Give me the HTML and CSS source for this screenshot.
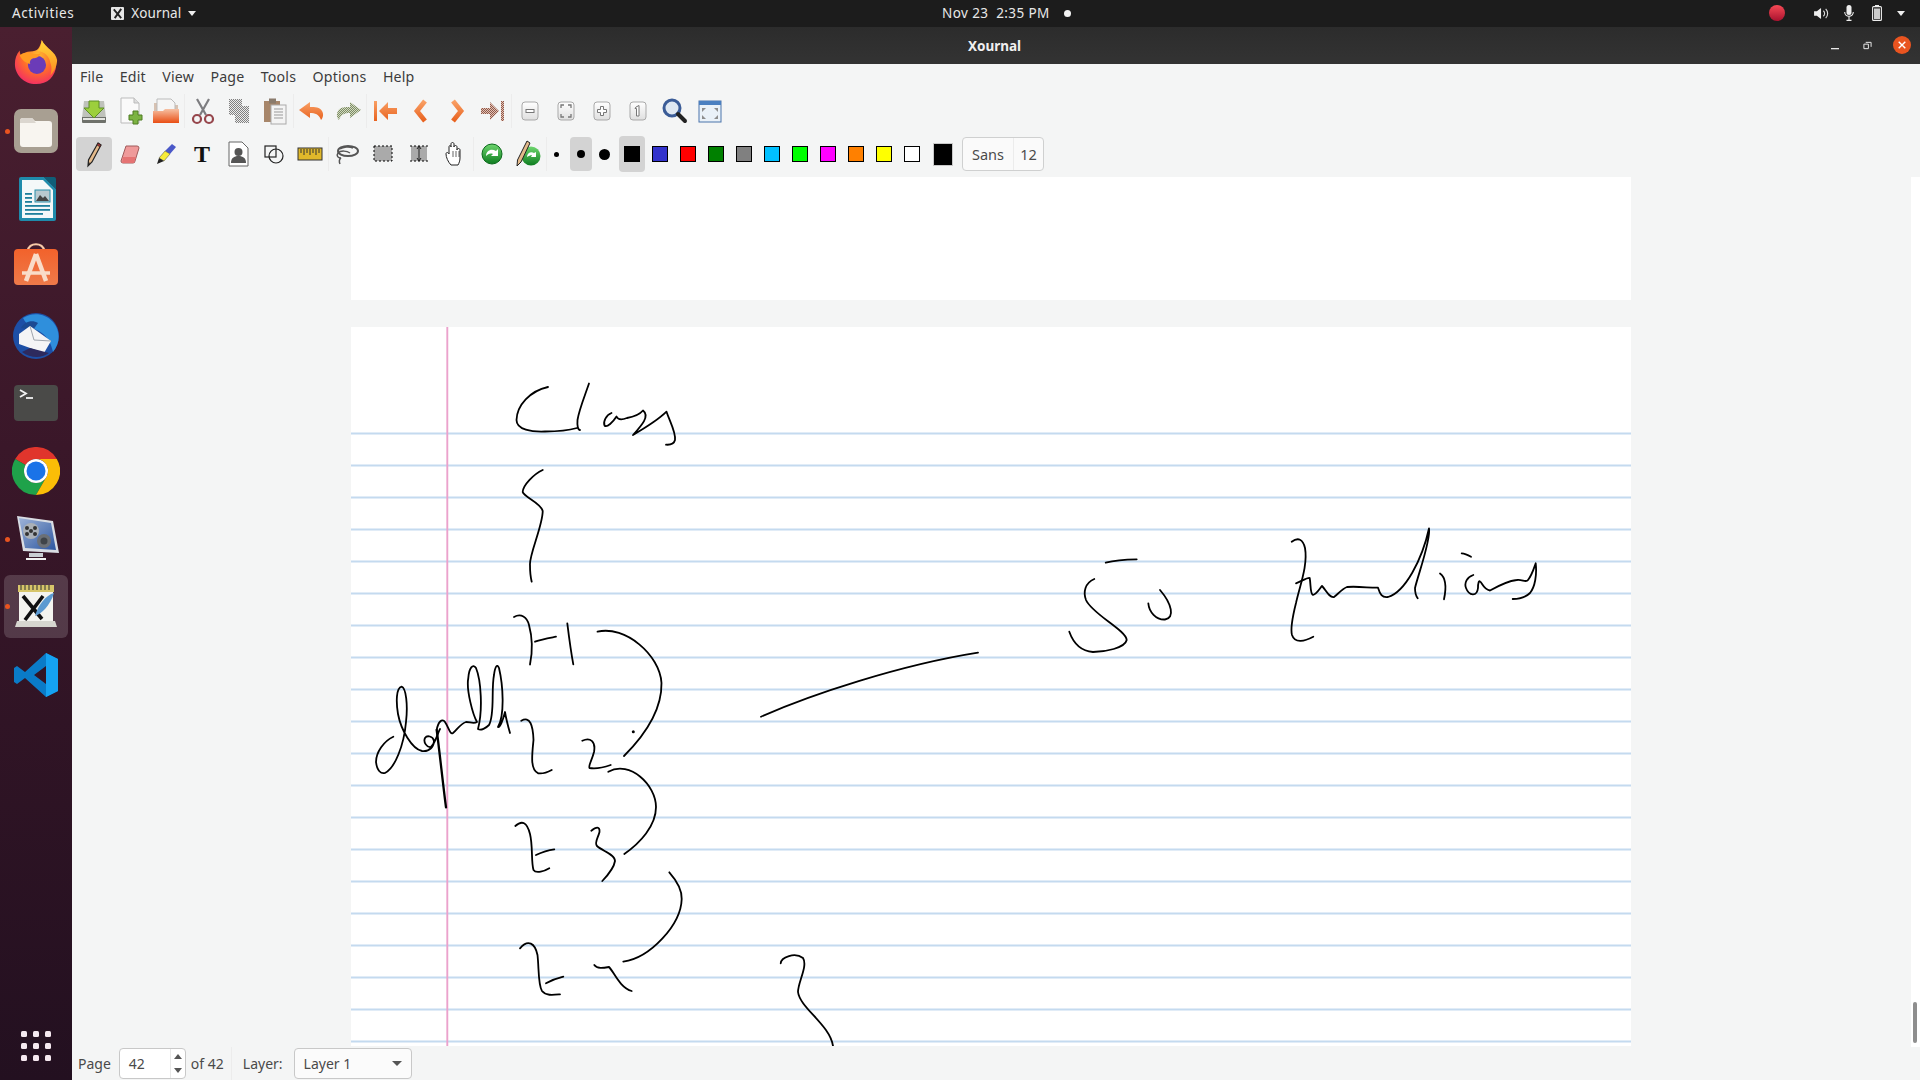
FILE: index.html
```html
<!DOCTYPE html>
<html lang="en">
<head>
<meta charset="utf-8">
<title>Xournal</title>
<link rel="stylesheet" href="styles.css">
</head>
<body>
<svg class="defs" aria-hidden="true">
  <defs>
    <pattern id="ditherGray" width="2" height="2" patternUnits="userSpaceOnUse"><rect width="2" height="2" fill="#ececec"/><rect width="1" height="1" fill="#808080"/><rect x="1" y="1" width="1" height="1" fill="#808080"/></pattern>
    <pattern id="ditherGreen" width="2" height="2" patternUnits="userSpaceOnUse"><rect width="2" height="2" fill="#d3dcc0"/><rect width="1" height="1" fill="#7c8a66"/><rect x="1" y="1" width="1" height="1" fill="#7c8a66"/></pattern>
    <pattern id="ditherRed" width="2" height="2" patternUnits="userSpaceOnUse"><rect width="2" height="2" fill="#e6c2b4"/><rect width="1" height="1" fill="#8c5a4c"/><rect x="1" y="1" width="1" height="1" fill="#8c5a4c"/></pattern>
    <linearGradient id="orangeArrow" x1="0" y1="0" x2="0" y2="1"><stop offset="0" stop-color="#f9a065"/><stop offset="1" stop-color="#e8621f"/></linearGradient>
    <linearGradient id="keyBox" x1="0" y1="0" x2="0" y2="1"><stop offset="0" stop-color="#fff"/><stop offset="1" stop-color="#dfdfdf"/></linearGradient>
    <linearGradient id="folderFront" x1="0" y1="0" x2="0" y2="1"><stop offset="0" stop-color="#f6c1a4"/><stop offset="1" stop-color="#e94e14"/></linearGradient>
    <radialGradient id="foxBody" cx="0.55" cy="0.35" r="0.75"><stop offset="0" stop-color="#ffbd2e"/><stop offset="0.5" stop-color="#ff6b2c"/><stop offset="1" stop-color="#f01f72"/></radialGradient>
    <linearGradient id="foxTop" x1="0" y1="0" x2="0" y2="1"><stop offset="0" stop-color="#ffd93a"/><stop offset="1" stop-color="#ff8a1f"/></linearGradient>
    <linearGradient id="shop" x1="0" y1="0" x2="0" y2="1"><stop offset="0" stop-color="#f2622b"/><stop offset="1" stop-color="#ee7a4a"/></linearGradient>
    <linearGradient id="greenBall" x1="0" y1="0" x2="0" y2="1"><stop offset="0" stop-color="#6ed66e"/><stop offset="1" stop-color="#0e7d20"/></linearGradient>
    <linearGradient id="redDot" x1="0" y1="0" x2="0" y2="1"><stop offset="0" stop-color="#f74a55"/><stop offset="1" stop-color="#a8122f"/></linearGradient>
    <linearGradient id="video" x1="0" y1="0" x2="1" y2="1"><stop offset="0" stop-color="#9fb4d8"/><stop offset="1" stop-color="#2c56a0"/></linearGradient>
  </defs>
</svg>

<header class="topbar">
  <span class="top-activities">Activities</span>
  <span class="top-app">
    <svg class="top-app-icon" viewBox="0 0 14 14"><rect width="14" height="14" rx="1" fill="#e6e6e6"/><path d="M3 2.500 11 12M11 2 4 12" stroke="#222" stroke-width="2" fill="none"/></svg>
    <span>Xournal</span>
    <i class="caret"></i>
  </span>
  <span class="top-clock">Nov 23&nbsp;&nbsp;2:35 PM<i class="clock-dot"></i></span>
  <span class="top-tray">
    <svg class="rec" viewBox="0 0 16 16"><circle cx="8" cy="8" r="8" fill="url(#redDot)"/></svg>
    <svg class="tray-speaker" viewBox="0 0 16 14"><path d="M0 4.500h3L7.500 1v12L3 9.500H0z" fill="#eee"/><path d="M10 4a4 4 0 0 1 0 6M12.500 2a7 7 0 0 1 0 10" fill="none" stroke="#ddd" stroke-width="1.200"/></svg>
    <svg class="tray-mic" viewBox="0 0 10 16"><rect x="2.500" y="0" width="5" height="10" rx="2.500" fill="#eee"/><path d="M.7 7a4.300 4.300 0 0 0 8.600 0M5 11.500V15M2.500 15.400h5" fill="none" stroke="#eee" stroke-width="1.100"/></svg>
    <svg class="tray-batt" viewBox="0 0 10 16"><path d="M3 0h4v1.500H3z" fill="#eee"/><rect x=".6" y="1.600" width="8.800" height="13.800" rx="1" fill="none" stroke="#eee" stroke-width="1.100"/><rect x="2" y="3.500" width="6" height="10.500" fill="#ccc"/></svg>
    <i class="caret"></i>
  </span>
</header>

<div class="desktop">
  <nav class="dock">
    <div class="dock-item">
      <svg class="dock-icon dock-icon-fox" viewBox="0 0 48 48"><path d="M24 47C11 47 2 37 2 26c0-5 1.500-10 5-14 0 3 1 5 2 6 2-3 5-5 9-5 8 0 10-4 12-12 2 5 6 7 9 11 4 5 6 10 6 15-.5 12-9 20-21 20z" fill="url(#foxBody)"/><path d="M30 1c-1 6-2 10-6 12 8-1 14 5 15 12 2 5 1 10 0 13 5-5 7-11 7-16-1-9-12-12-16-21z" fill="url(#foxTop)"/><circle cx="25" cy="27" r="9.500" fill="#6b3bb8"/><path d="M7 17c3-3 8-4 13-2 3 1 6 1 9 0-2 4-5 5-8 5-3 1-4 4-3 6-5-1-9-4-11-9z" fill="#ff9b22"/></svg>
    </div>
    <div class="dock-item">
      <i class="run-dot"></i>
      <svg class="dock-icon" viewBox="0 0 48 48"><rect x="2" y="2" width="44" height="44" rx="7" fill="#a89f92"/><path d="M8 14a3 3 0 0 1 3-3h9l3 3h14a3 3 0 0 1 3 3v20a3 3 0 0 1-3 3H11a3 3 0 0 1-3-3z" fill="#f8f5f0"/><path d="M8 16v-2a3 3 0 0 1 3-3h9l4 5z" fill="#dbd6cf"/></svg>
    </div>
    <div class="dock-item">
      <svg class="dock-icon" viewBox="0 0 48 48"><path d="M9 2h23l12 12v30a2 2 0 0 1-2 2H9a2 2 0 0 1-2-2V4a2 2 0 0 1 2-2z" fill="#1f8bab"/><path d="M10 5h21l10 10v28H10z" fill="#f4f8f9"/><path d="M32 2h10a2 2 0 0 1 2 2v10z" fill="#0f5e78"/><rect x="13" y="18" width="7" height="1.800" fill="#1f7f9c"/><rect x="13" y="22" width="7" height="1.800" fill="#1f7f9c"/><rect x="13" y="26" width="7" height="1.800" fill="#1f7f9c"/><rect x="13" y="30" width="25" height="1.800" fill="#1f7f9c"/><rect x="13" y="34" width="25" height="1.800" fill="#1f7f9c"/><rect x="13" y="38" width="18" height="1.800" fill="#1f7f9c"/><rect x="23" y="15" width="15" height="12" fill="#b8c9cf" stroke="#2a8ea9" stroke-width="1"/><path d="M24 26l4-6 3 3 2-2 4 5z" fill="#444"/></svg>
    </div>
    <div class="dock-item">
      <svg class="dock-icon" viewBox="0 0 48 48"><path d="M16 8c0-9 16-9 16 0" fill="none" stroke="#f7c9a8" stroke-width="2.200"/><rect x="2" y="6" width="44" height="36" rx="4" fill="url(#shop)"/><path d="M24 11 14 38M24 11l10 27" stroke="#f9dcc8" stroke-width="4.500" fill="none"/><path d="M10 30h28" stroke="#f9dcc8" stroke-width="3.500"/></svg>
    </div>
    <div class="dock-item">
      <svg class="dock-icon" viewBox="0 0 48 48"><circle cx="24" cy="25" r="23" fill="#1d4fa6"/><path d="M11 7c9-6 22-5 30 4 8 9 7 22 0 30-2-10-7-17-14-21-6-3-12-5-16-13z" fill="#2f8fdc"/><path d="M9 17c3-6 11-9 17-5l-5 7z" fill="#1b4a93"/><path d="M7 23 18 15l21 15-7 12-25-9z" fill="#f5f4f6"/><path d="M18 15l4 14 17 1" fill="none" stroke="#9fa4ad" stroke-width="1"/><path d="M10 41c8 6 19 7 27 1L18 37z" fill="#2d2a5e"/></svg>
    </div>
    <div class="dock-item">
      <svg class="dock-icon" viewBox="0 0 48 48"><rect x="2" y="6" width="44" height="36" rx="4" fill="#4a4a48"/><path d="M8 11l6 3.500-6 3.500" fill="none" stroke="#f2f2f2" stroke-width="1.800"/><path d="M14 19h7" stroke="#f2f2f2" stroke-width="1.800"/></svg>
    </div>
    <div class="dock-item">
      <svg class="dock-icon" viewBox="0 0 48 48"><path d="M3.200 12A24 24 0 0 1 44.800 12H24A12 12 0 0 0 13.600 18z" fill="#e0352c"/><path d="M3.200 12A24 24 0 0 0 24 48L34.400 30A12 12 0 0 1 13.600 18z" fill="#1fa24a"/><path d="M44.800 12A24 24 0 0 1 24 48L34.400 30A12 12 0 0 0 24 12z" fill="#fbbd07"/><circle cx="24" cy="24" r="12" fill="#fff"/><circle cx="24" cy="24" r="9.500" fill="#1a73e8"/></svg>
    </div>
    <div class="dock-item">
      <i class="run-dot"></i>
      <svg class="dock-icon" viewBox="0 0 48 48"><path d="M5 1 41 6l6 32-36-2z" fill="#d9dde3"/><path d="M7 3 39 8l5 27-31-2z" fill="url(#video)"/><circle cx="19" cy="16" r="8" fill="#aab0b6"/><circle cx="19" cy="16" r="2" fill="#333"/><circle cx="15" cy="13" r="2" fill="#333"/><circle cx="23" cy="13" r="2" fill="#333"/><circle cx="15" cy="19" r="2" fill="#333"/><circle cx="23" cy="19" r="2" fill="#333"/><circle cx="32" cy="26" r="7" fill="#6b7076"/><circle cx="32" cy="26" r="3.500" fill="#3f4449"/><rect x="17" y="38" width="14" height="4" fill="#c9cdd2"/><rect x="14" y="43" width="20" height="2" fill="#f1f1f1"/></svg>
    </div>
    <div class="dock-item dock-item-active">
      <i class="run-dot"></i>
      <svg class="dock-icon" viewBox="0 0 48 48"><rect x="7" y="4" width="34" height="38" fill="#f4f4ef"/><path d="M5 38h38l2 6H3z" fill="#d6d6cf"/><rect x="6" y="2" width="36" height="7" fill="#d7c66a"/><path d="M9 2v5M13 2v5M17 2v5M21 2v5M25 2v5M29 2v5M33 2v5M37 2v5" stroke="#4a4a3a" stroke-width="1.200"/><path d="M11 13 30 36M31 13 13 37" stroke="#111" stroke-width="3.600" fill="none"/><path d="M42 10C34 12 26 22 23 33c6-2 15-10 19-23z" fill="#5b9ad1"/></svg>
    </div>
    <div class="dock-item">
      <svg class="dock-icon" viewBox="0 0 48 48"><path d="M46 8 34 2 13 21 5 15 2 17v14l3 2 8-6 21 19 12-6V8zM34 33 22 24 34 15z" fill="#0a7bc8" fill-rule="evenodd"/><path d="M34 2l12 6v32l-12 6z" fill="#15a2f2"/></svg>
    </div>
    <div class="dock-grid"><i></i><i></i><i></i><i></i><i></i><i></i><i></i><i></i><i></i></div>
  </nav>

  <main class="window">
    <div class="titlebar">
      <span class="title">Xournal</span>
      <span class="win-buttons">
        <svg class="win-min" viewBox="0 0 10 3"><rect y="1" width="8" height="1.300" fill="#e8e8e8"/></svg>
        <svg class="win-max" viewBox="0 0 10 10"><path d="M3 1.500h6v5M1 3.500h5v5H1z" fill="none" stroke="#e8e8e8" stroke-width="1.100"/></svg>
        <svg class="win-close" viewBox="0 0 18 18"><circle cx="9" cy="9" r="9" fill="#e95420"/><path d="M5.700 5.700l6.600 6.600M12.300 5.700l-6.600 6.600" stroke="#fff" stroke-width="1.400"/></svg>
      </span>
    </div>

    <div class="menubar">
      <span>File</span><span>Edit</span><span>View</span><span>Page</span><span>Tools</span><span>Options</span><span>Help</span>
    </div>

    <div class="toolbar toolbar-top">
      <span class="tb"><svg class="i" viewBox="0 0 28 28"><path d="M4 4h20l2 17v4H2v-4z" fill="#bfc2bb"/><path d="M2 20h24v5a1 1 0 0 1-1 1H3a1 1 0 0 1-1-1z" fill="#6e716b"/><path d="M3 21h22v2H3z" fill="#e5e6e2"/><path d="M9 4h10v7h5l-10 10L4 11h5z" fill="#9ccf3c" stroke="#5d9024" stroke-width="1"/></svg></span>
      <span class="tb"><svg class="i" viewBox="0 0 28 28"><path d="M5 1h13l5 5v20H5z" fill="#fafafa" stroke="#bbb"/><path d="M18 1v5h5" fill="#ddd" stroke="#bbb"/><path d="M17 14h5v4h4v5h-4v4h-5v-4h-4v-5h4z" fill="#7cb342" stroke="#4f7c23"/></svg></span>
      <span class="tb"><svg class="i" viewBox="0 0 28 28"><path d="M2 6h7l2 2h15v18H2z" fill="#d7c2b2"/><path d="M5 2h14l4 4v14H5z" fill="#f6f6f6" stroke="#bbb"/><path d="M1 14h10l2-2h14v14H1z" fill="url(#folderFront)"/></svg></span>
      <i class="sep"></i>
      <span class="tb"><svg class="i" viewBox="0 0 28 28"><path d="M8 2l9 16M20 2l-9 16" stroke="#7d7d80" stroke-width="2.200"/><circle cx="8" cy="22" r="4" fill="none" stroke="#96464c" stroke-width="2.200"/><circle cx="20" cy="22" r="4" fill="none" stroke="#96464c" stroke-width="2.200"/></svg></span>
      <span class="tb"><svg class="i" viewBox="0 0 28 28"><rect x="4" y="2" width="13" height="16" fill="url(#ditherGray)"/><rect x="10" y="9" width="14" height="17" fill="url(#ditherGray)"/></svg></span>
      <span class="tb"><svg class="i" viewBox="0 0 28 28"><rect x="3" y="4" width="16" height="21" fill="#a7866a"/><rect x="8" y="1.500" width="7" height="5" fill="#8a7b6c"/><rect x="10" y="8" width="15" height="19" fill="#f4f4f4" stroke="#aaa"/><path d="M13 12h9M13 15h9M13 18h9M13 21h9" stroke="#999"/></svg></span>
      <i class="sep"></i>
      <span class="tb"><svg class="i" viewBox="0 0 28 28"><path d="M12 5 1 13l11 8v-5c5 0 9 1 11 7 2-2 3-6 1-9-2-4-7-4-12-4z" fill="url(#orangeArrow)"/></svg></span>
      <span class="tb"><svg class="i" viewBox="0 0 28 28"><path d="M16 5l11 8-11 8v-5c-5 0-9 1-11 7-2-2-3-6-1-9 2-4 7-4 12-4z" fill="url(#ditherGreen)"/></svg></span>
      <i class="sep"></i>
      <span class="tb"><svg class="i" viewBox="0 0 28 28"><path d="M3 4h3v20H3zM8 14l9-9v6h9v6h-9v6z" fill="url(#orangeArrow)"/></svg></span>
      <span class="tb"><svg class="i" viewBox="0 0 28 28"><path d="M18 4 10 14l8 10" fill="none" stroke="url(#orangeArrow)" stroke-width="4.800"/></svg></span>
      <span class="tb"><svg class="i" viewBox="0 0 28 28"><path d="M10 4l8 10-8 10" fill="none" stroke="url(#orangeArrow)" stroke-width="4.800"/></svg></span>
      <span class="tb"><svg class="i" viewBox="0 0 28 28"><path d="M25 4h-3v20h3zM20 14l-9-9v6H2v6h9v6z" fill="url(#ditherRed)"/></svg></span>
      <i class="sep"></i>
      <span class="tb"><svg class="i" viewBox="0 0 28 28"><rect x="6" y="5" width="16" height="18" rx="3" fill="url(#keyBox)" stroke="#a9a9a9"/><rect x="10" y="12.500" width="8" height="3" fill="#fff" stroke="#777"/></svg></span>
      <span class="tb"><svg class="i" viewBox="0 0 28 28"><rect x="6" y="5" width="16" height="18" rx="3" fill="url(#keyBox)" stroke="#a9a9a9"/><path d="M9 11V8h3M16 8h3v3M9 17v3h3M19 17v3h-3" fill="none" stroke="#777" stroke-width="1.300"/></svg></span>
      <span class="tb"><svg class="i" viewBox="0 0 28 28"><rect x="6" y="5" width="16" height="18" rx="3" fill="url(#keyBox)" stroke="#a9a9a9"/><path d="M12.500 9.500h3v3h3v3h-3v3h-3v-3h-3v-3h3z" fill="#fff" stroke="#777"/></svg></span>
      <span class="tb"><svg class="i" viewBox="0 0 28 28"><rect x="6" y="5" width="16" height="18" rx="3" fill="url(#keyBox)" stroke="#a9a9a9"/><path d="M12 10l3-1.500V19h-2.500v-7.500H11z" fill="#fff" stroke="#777"/></svg></span>
      <span class="tb"><svg class="i" viewBox="0 0 28 28"><circle cx="12" cy="11" r="8" fill="#dfe8f2" stroke="#3b5c97" stroke-width="3"/><path d="M18 17l7 7" stroke="#222" stroke-width="4" stroke-linecap="round"/></svg></span>
      <span class="tb"><svg class="i" viewBox="0 0 28 28"><rect x="3" y="4" width="22" height="21" fill="#eaf1f8" stroke="#4a74ab"/><rect x="3" y="4" width="22" height="4" fill="#4a7fc0"/><path d="M6 11h4L6 15zM22 11h-4l4 4zM6 22h4l-4-4zM22 22h-4l4-4z" fill="#8d8d8d"/></svg></span>
    </div>

    <div class="toolbar toolbar-bottom">
      <span class="tb tb-on"><svg class="i" viewBox="0 0 28 28"><path d="M18 3l3 2-9 17-4 4 .5-6z" fill="#e3b98a" stroke="#222" stroke-width="1.200"/><path d="M17 5l3 2 1-2-3-2z" fill="#a23434" stroke="#222" stroke-width=".6"/><path d="M8 26l.4-4 1.600 1z" fill="#222"/></svg></span>
      <span class="tb"><svg class="i" viewBox="0 0 28 28"><path d="M10 6h11a2 2 0 0 1 2 2l-4 13a2 2 0 0 1-2 2H7a2 2 0 0 1-2-2z" fill="#ef9a9a" stroke="#a05a5a"/><path d="M7 17h13l-2 6H6z" fill="#e57373"/></svg></span>
      <span class="tb"><svg class="i" viewBox="0 0 28 28"><path d="M20 4l4 3-6 7-5-3z" fill="#4a58c8"/><path d="M13 11l5 3-6 7-5-3z" fill="#f7ec3a" stroke="#444" stroke-width=".5"/><path d="M7 18l5 3-7 3z" fill="#222"/></svg></span>
      <span class="tb tb-t">T</span>
      <span class="tb"><svg class="i" viewBox="0 0 28 28"><path d="M5 2h13l6 6v18H5z" fill="#fff" stroke="#666" stroke-width="1"/><circle cx="14.500" cy="12" r="4" fill="#555"/><path d="M7 23c0-5 3-7 7.500-7s7.500 2 7.500 7z" fill="#555"/></svg></span>
      <span class="tb"><svg class="i" viewBox="0 0 28 28"><circle cx="16" cy="16" r="7" fill="none" stroke="#222" stroke-width="1.200"/><rect x="5" y="6" width="11" height="11" fill="none" stroke="#222" stroke-width="1.200"/></svg></span>
      <span class="tb"><svg class="i" viewBox="0 0 28 28"><rect x="2" y="8" width="24" height="12" fill="#e0b82a" stroke="#333"/><path d="M5 9v4M8 9v6M11 9v4M14 9v6M17 9v4M20 9v6M23 9v4" stroke="#333"/></svg></span>
      <i class="sep"></i>
      <span class="tb"><svg class="i" viewBox="0 0 28 28"><ellipse cx="15" cy="11" rx="10" ry="5" fill="none" stroke="#555" stroke-width="2"/><path d="M17 13c-3-2-9-3-12 0-2 3 0 5 3 5-2 1-2 4-1 6M7 9c3-2 9-3 13-1" fill="none" stroke="#555" stroke-width="1.500"/></svg></span>
      <span class="tb"><svg class="i" viewBox="0 0 28 28"><rect x="5" y="6" width="18" height="15" fill="#aaa" stroke="#000" stroke-dasharray="2 2"/></svg></span>
      <span class="tb"><svg class="i" viewBox="0 0 28 28"><rect x="6" y="6" width="16" height="15" fill="#aaa"/><path d="M5 6h18M5 21h18" stroke="#000" stroke-dasharray="2 2"/><path d="M14 6v15M12 9l2-3 2 3M12 18l2 3 2-3" stroke="#222" fill="none"/></svg></span>
      <span class="tb"><svg class="i" viewBox="0 0 28 28"><path d="M10 25c-3-3-5-8-5-11 0-2 2-2 3 0V7c0-2 2-2 2 0V4c0-2 3-2 3 0v3c0-2 3-2 3 0v3c0-2 3-2 3 0v8c0 3-1 5-2 7z" fill="#fff" stroke="#222" stroke-width="1"/><path d="M12 11v6M15 11v6M18 11v6" stroke="#222" stroke-width=".7"/></svg></span>
      <i class="sep"></i>
      <span class="tb"><svg class="i" viewBox="0 0 28 28"><circle cx="14" cy="14" r="10" fill="url(#greenBall)" stroke="#0b6a1b"/><path d="M8 16c0-5 5-8 10-5l2-2v7h-7l2-2c-3-1-5 0-7 2z" fill="#fff"/></svg></span>
      <span class="tb"><svg class="i" viewBox="0 0 28 28"><circle cx="17" cy="16" r="9.500" fill="url(#greenBall)"/><path d="M13 17c0-4 4-6 7-4l2-1v5h-5l1-2c-2 0-3 1-5 2z" fill="#fff"/><path d="M13 1l3 2L7 22l-4 4 .5-6z" fill="#e3b98a" stroke="#222"/></svg></span>
      <i class="sep"></i>
      <span class="tb-thin"><i class="dot dot-s"></i></span>
      <span class="tb-thick tb-on"><i class="dot dot-m"></i></span>
      <span class="tb-thick tb-big"><i class="dot dot-l"></i></span>
      <span class="tb-colour tb-on"><i class="swatch swatch-black"></i></span>
      <span class="tb-sw"><i class="swatch swatch-blue"></i></span>
      <span class="tb-sw"><i class="swatch swatch-red"></i></span>
      <span class="tb-sw"><i class="swatch swatch-green"></i></span>
      <span class="tb-sw"><i class="swatch swatch-gray"></i></span>
      <span class="tb-sw"><i class="swatch swatch-cyan"></i></span>
      <span class="tb-sw"><i class="swatch swatch-lime"></i></span>
      <span class="tb-sw"><i class="swatch swatch-magenta"></i></span>
      <span class="tb-sw"><i class="swatch swatch-orange"></i></span>
      <span class="tb-sw"><i class="swatch swatch-yellow"></i></span>
      <span class="tb-sw"><i class="swatch swatch-white"></i></span>
      <span class="tb-current"><i></i></span>
      <span class="font-btn"><span class="font-name">Sans</span><span class="font-size">12</span></span>
    </div>

    <div class="canvas">
      <div class="pages">
        <div class="page page-prev"></div>
        <svg class="page-sheet" viewBox="351 327 1280 719" width="1280" height="719">
          <path class="rule" d="M351 433.500H1631M351 465.500H1631M351 497.500H1631M351 529.500H1631M351 561.500H1631M351 593.500H1631M351 625.500H1631M351 657.500H1631M351 689.500H1631M351 721.500H1631M351 753.500H1631M351 785.500H1631M351 817.500H1631M351 849.500H1631M351 881.500H1631M351 913.500H1631M351 945.500H1631M351 977.500H1631M351 1009.500H1631M351 1041.500H1631"/>
          <path class="margin" d="M447.300 327V1046"/>
          <g class="ink">
            <path d="M548 387C530 391 517 405 516.500 420C516.500 430 532 432 545 431.500C557 431.500 570 430 577 428"/>
            <path d="M589 383.500C584 398 579 410 577.500 420C577 426 578 430 580 430"/>
            <path d="M611.500 413C606 415 603 422 604.500 425.500C607 428 613 422 616.500 416.500C618 420 622 420 627 418C633 417 640 414 643 410.500C650 416 642 425 633 435C645 428 658 420 666.500 411.700C670 422 676 432 675 440C674 444 670 445 666 444.700"/>
            <path d="M542.700 470C534 474 523 485 522.700 492C524 497 541 503 542.700 511C543 525 529 555 530 565C530 572 530.500 577 531.700 581.700"/>
            <path d="M514 617C521 613 527 617 529 625C532 636 533 650 530 664.500"/>
            <path d="M535 641.700C542 639 549 638 556 636.700"/>
            <path d="M567.300 623.300C569 637 571 652 573.300 664.300"/>
            <path d="M597.500 631.700C625 625 660 655 661.500 683C662 710 645 735 624 756"/>
            <circle class="ink-dot" cx="633.300" cy="731.700" r="1.500"/>
            <path d="M521.300 720.700C530 716 533 725 533.500 740C532 755 530 770 538.300 773.300C543 774 548 772 551.700 770"/>
            <path d="M582.300 740.700C590 737 596 741 594 752C592 760 588 766 589.500 768C595 769 605 767 610.700 765"/>
            <path d="M608.300 771.700C630 760 656 785 656 807C656 826 640 843 624.300 854"/>
            <path d="M515.300 826C522 820 527 822 530 834C533 846 531 862 533.500 870C536 874 545 871 549.300 868.300"/>
            <path d="M536 855C542 852 548 850 554.300 849.300"/>
            <path d="M591.300 830.700C596 827 600 826 599.500 832C598 838 594 843 597 846C602 851 615 854 615 861C614 868 608 875 602.300 881"/>
            <path d="M669.300 872.300C677 881 682 890 681.700 899C681 925 650 958 623.300 961.700"/>
            <path d="M520 948.300C528 939 535 943 537.500 955C539 968 538 985 542 991C546 996 553 995 560 994.300"/>
            <path d="M546 983.300C552 980 558 978 563.300 976.700"/>
            <path d="M594.300 965C597 969 603 968 609 967C614 972 620 988 631.700 991"/>
            <path d="M780.700 963.300C781 957 795 952 803 958C808 966 798 982 798 992C800 1008 830 1025 833 1046"/>
            <path d="M761 716.700C810 695 900 665 978 652.700"/>
            <path d="M1105.700 562.700C1116 560 1126 559.500 1136.700 559.300"/>
            <path d="M1094.300 579C1085 583 1083 592 1086 600C1092 614 1126 630 1126.700 640C1125 648 1105 652 1093 652C1080 651 1073 642 1069.300 631.700"/>
            <path d="M1148.300 603.300C1149 612 1156 620 1165 619.500C1175 618 1172 604 1160 590"/>
            <path d="M1291.700 541.700C1298 537 1303 539 1305 548C1308 565 1300 585 1296 603C1293 615 1290 628 1292 635C1295 644 1305 641 1313.300 636.700"/>
            <path d="M1296 583.300C1302 581 1308 577 1309.700 578C1311 585 1310 594 1313 595C1317 594 1320 588 1322 586C1326 590 1329 598 1334 597C1338 594 1342 589 1347 587C1358 586 1370 588 1378 587.700C1380 594 1382 598 1388 597C1405 592 1422 560 1429 528.500C1431 540 1418 575 1415 588C1415 592 1416 596 1417.700 598.300"/>
            <path d="M1440 573.500C1445 577 1447 585 1444 599.300"/>
            <path d="M1461.700 553.300C1465 553.500 1468 555 1471 556.700"/>
            <path d="M1473.300 575C1467 577 1464 583 1466 588C1469 596 1477 597 1478 588C1478 583 1479 580 1480 581.700C1482 582 1483 589 1490 590.500C1498 586 1508 581 1516.700 580C1522 579 1526 583 1528 580C1532 575 1534 568 1535.700 563.300C1537 575 1535 587 1530 593C1525 598 1518 599 1512.700 599"/>
            <path d="M393.300 736.700C384 741 376 752 376 762C377 771 381 774 385 773C395 768 404 745 406 722C408 705 406 688 401.700 686.700C396 688 396 702 398 714C401 730 412 749 422 751C430 752 434 746 434 741C433 736 427 735 425 738C423 742 427 748 431 747C436 742 438 732 440 729"/>
            <path class="ink-bold" d="M436.700 730C440 755 443 785 446 807.300"/>
            <path d="M436.700 730C438 722 442 718 445 722C449 728 450 735 453 733C457 730 460 724 466 722C470 722 474 724 477 722C473 715 466 690 468.300 678C469 668 473 663 476 668C481 680 483 710 478 729C481 731 486 728 489 725C495 715 491 690 494 675C495 667 497 663 499 668C503 685 505 715 498 727C500 728 503 720 505 712C506 718 508 726 510 733"/>
          </g>
        </svg>
      </div>
      <div class="scroller"><i class="scroll-thumb"></i></div>
    </div>

    <div class="statusbar">
      <span class="st-page">Page</span>
      <span class="spin"><span class="spin-val">42</span><span class="spin-arrows"><i class="arrow-up"></i><i class="arrow-down"></i></span></span>
      <span class="st-of">of 42</span>
      <i class="st-sep"></i>
      <span class="st-layer">Layer:</span>
      <span class="combo"><span>Layer 1</span><i class="combo-caret"></i></span>
    </div>
  </main>
</div>
</body>
</html>
```

FILE: styles.css
```css
* { box-sizing: border-box; }
html, body { margin: 0; height: 100%; overflow: hidden; }
body {
  display: flex;
  flex-direction: column;
  width: 1920px;
  height: 1080px;
  font-family: "Noto Sans", "Open Sans", sans-serif;
  font-size: 14px;
  background: #f4f5f5;
}
i { display: block; }
.defs { display: block; width: 0; height: 0; }

/* top panel */
.topbar {
  height: 27px;
  flex: none;
  display: flex;
  align-items: center;
  background: #1c1c1c;
  color: #e8e8e8;
  font-size: 13.5px;
  line-height: 25px;
  padding-bottom: 1px;
  position: relative;
}
.top-activities { margin-left: 12px; letter-spacing: .6px; }
.top-app { display: flex; align-items: center; margin-left: 37px; letter-spacing: .1px; }
.top-app-icon { width: 13px; height: 13px; margin-right: 7px; }
.caret { width: 0; height: 0; border-left: 4.5px solid transparent; border-right: 4.5px solid transparent; border-top: 5px solid #eee; margin-left: 7px; }
.top-clock { position: absolute; left: 942px; display: flex; align-items: center; letter-spacing: .4px; }
.clock-dot { width: 7px; height: 7px; border-radius: 50%; background: #f4f4f4; margin-left: 14px; }
.top-tray { margin-left: auto; display: flex; align-items: center; }
.rec { width: 16px; height: 16px; margin-right: 29px; }
.tray-speaker { width: 15px; height: 13px; margin-right: 15px; }
.tray-mic { width: 10px; height: 16px; margin-right: 18px; }
.tray-batt { width: 10px; height: 16px; margin-right: 13px; }
.top-tray .caret { margin: 0 15px 0 2px; }

.desktop { flex: 1; display: flex; min-height: 0; }

/* dock */
.dock {
  width: 72px;
  flex: none;
  display: flex;
  flex-direction: column;
  padding-top: 2px;
  background: linear-gradient(180deg, #4a1f30 0%, #3a1729 40%, #231020 100%);
}
.dock-item { height: 68px; flex: none; display: flex; align-items: center; justify-content: center; position: relative; }
.dock-icon { width: 48px; height: 48px; }
.dock-icon-fox { width: 46px; height: 46px; margin-top: -3px; }
.dock-item-active { margin: 2px 4px 3px; height: 63px; background: rgba(255, 255, 255, 0.16); border-radius: 6px; }
.run-dot { position: absolute; left: 5px; top: 50%; width: 5px; height: 5px; margin-top: -2.500px; border-radius: 50%; background: #e95420; }
.dock-item-active .run-dot { left: 1px; }
.dock-grid { margin-top: auto; margin-bottom: 19px; align-self: center; display: grid; grid-template-columns: repeat(3, 6px); gap: 6px; }
.dock-grid i { width: 6px; height: 6px; border-radius: 1.500px; background: #f5e8ef; }

/* window */
.window { flex: 1; min-width: 0; display: flex; flex-direction: column; }
.titlebar {
  height: 37px;
  flex: none;
  position: relative;
  display: flex;
  align-items: center;
  justify-content: center;
  background: linear-gradient(180deg, #2c2c2c, #333);
  color: #f0f0f0;
  padding-right: 3px;
}
.title { font-weight: 700; font-size: 13.5px; }
.win-buttons { position: absolute; right: 9px; top: 0; height: 100%; display: flex; align-items: center; }
.win-min { width: 10px; height: 3px; margin-right: 22px; margin-top: 5px; }
.win-max { width: 9px; height: 9px; margin-right: 21px; margin-top: -1px; }
.win-close { width: 18px; height: 18px; margin-top: -1px; }

.menubar {
  height: 24px;
  flex: none;
  display: flex;
  align-items: center;
  gap: 16.5px;
  padding-left: 8px;
  color: #3c3c3c;
  font-size: 14.2px;
  letter-spacing: .15px;
}
.toolbar { flex: none; display: flex; align-items: center; padding-left: 4px; }
.toolbar-top { height: 45px; padding-top: 1px; }
.toolbar-bottom { height: 44px; padding-bottom: 2px; }
.tb { width: 36px; height: 34px; flex: none; display: flex; align-items: center; justify-content: center; border-radius: 4px; }
.tb-on { background: #d3d3d3; }
.i { width: 28px; height: 28px; }
.toolbar .sep { width: 1px; height: 34px; background: #ececec; flex: none; }
.tb-t { font-family: "Liberation Serif", serif; font-weight: 700; font-size: 24px; color: #111; }

.tb-thin { width: 20px; height: 34px; flex: none; display: flex; align-items: center; justify-content: center; margin-left: -1px; margin-right: 1px; }
.tb-thick { width: 22px; height: 34px; flex: none; display: flex; align-items: center; justify-content: center; border-radius: 4px; margin-left: 3px; }
.tb-big { width: 24px; margin-left: 0; }
.dot { border-radius: 50%; background: #000; }
.dot-s { width: 5px; height: 5px; }
.dot-m { width: 8px; height: 8px; }
.dot-l { width: 11px; height: 11px; }
.tb-colour { width: 26px; height: 36px; margin: 0 1px 0 3px; flex: none; display: flex; align-items: center; justify-content: center; border-radius: 4px; }
.tb-sw { width: 28px; height: 34px; flex: none; display: flex; align-items: center; justify-content: center; }
.swatch { width: 16px; height: 16px; border: 1px solid #000; }
.swatch-black { background: #000; }
.swatch-blue { background: #3333cc; }
.swatch-red { background: #f00; }
.swatch-green { background: #008000; }
.swatch-gray { background: #808080; }
.swatch-cyan { background: #00c0ff; }
.swatch-lime { background: #0f0; }
.swatch-magenta { background: #f0f; }
.swatch-orange { background: #ff8000; }
.swatch-yellow { background: #ff0; }
.swatch-white { background: #fff; }
.tb-current { width: 34px; flex: none; display: flex; justify-content: center; }
.tb-current i { width: 20px; height: 23px; background: #000; border: 1px solid #c9c9c9; }
.font-btn { width: 82px; height: 34px; margin-left: 2px; flex: none; display: flex; align-items: center; background: #fafafa; border: 1px solid #cfd0d0; border-radius: 4px; color: #4a4a4a; font-size: 14.5px; }
.font-name { width: 51px; text-align: center; border-right: 1px solid #ececec; line-height: 32px; }
.font-size { flex: 1; text-align: center; }

/* canvas */
.canvas { flex: 1; min-height: 0; display: flex; overflow: hidden; }
.pages { padding-left: 279px; display: flex; flex-direction: column; flex: none; }
.page-prev { width: 1280px; height: 123px; background: #fff; margin-bottom: 27px; flex: none; }
.page-sheet { display: block; flex: none; background: #fff; }
.rule { fill: none; stroke: #c4daef; stroke-width: 1.900; }
.margin { fill: none; stroke: #eba2cc; stroke-width: 1.900; }
.ink path { fill: none; stroke: #000; stroke-width: 1.800; stroke-linecap: round; stroke-linejoin: round; }
.ink .ink-bold { stroke-width: 2.300; }
.ink-dot { fill: #000; }
.scroller { margin-left: auto; width: 9px; background: #fff; padding: 825px 0 0 2px; }
.scroll-thumb { width: 4px; height: 41px; border-radius: 2px; background: #8e8e8e; }

/* status */
.statusbar { height: 33px; flex: none; display: flex; align-items: center; color: #4a4a4a; font-size: 14px; }
.st-page { margin-left: 6px; }
.spin { width: 67px; height: 31px; margin-left: 8px; display: flex; align-items: center; background: #fff; border: 1px solid #c8c8c8; border-radius: 4px; }
.spin-val { width: 50px; padding-left: 9px; }
.spin-arrows { flex: 1; height: 100%; border-left: 1px solid #e8e8e8; display: flex; flex-direction: column; align-items: center; justify-content: space-between; padding: 5px 0; }
.arrow-up { border-left: 4.500px solid transparent; border-right: 4.500px solid transparent; border-bottom: 5px solid #555; }
.arrow-down { border-left: 4.500px solid transparent; border-right: 4.500px solid transparent; border-top: 5px solid #555; }
.st-of { margin-left: 5px; }
.st-sep { width: 1px; height: 100%; background: #ececec; margin-left: 7px; }
.st-layer { margin-left: 11px; }
.combo { width: 118px; height: 31px; margin-left: 11px; display: flex; align-items: center; justify-content: space-between; padding: 0 9px; background: #fbfbfb; border: 1px solid #c8c8c8; border-radius: 4px; }
.combo-caret { border-left: 5px solid transparent; border-right: 5px solid transparent; border-top: 5px solid #555; }
```
